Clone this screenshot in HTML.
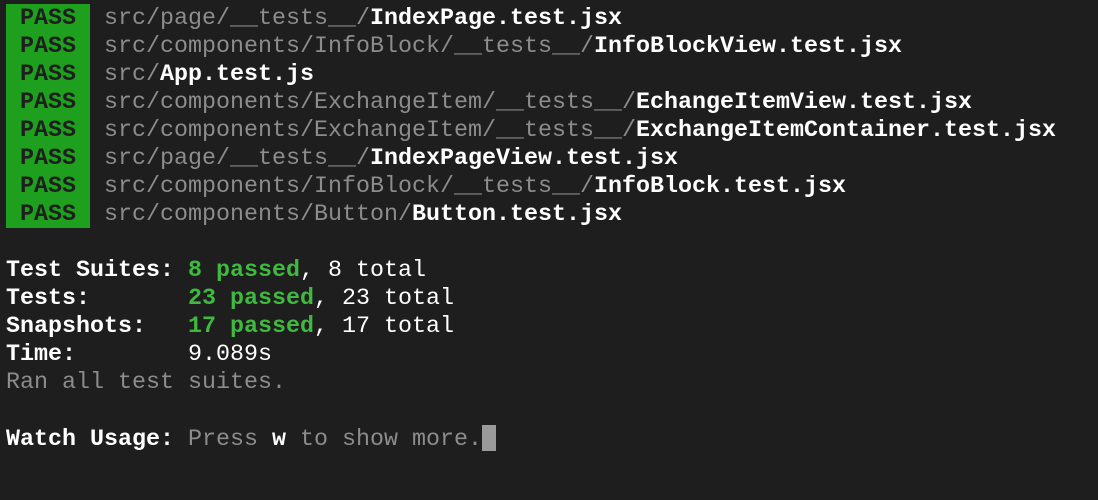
<!DOCTYPE html>
<html><head><meta charset="utf-8"><style>
html,body{margin:0;padding:0;background:#1e1e1e;width:1098px;height:500px;overflow:hidden}
pre{margin:0;position:absolute;left:6px;top:5px;font-family:"Liberation Mono",monospace;font-size:23.33px;line-height:28px;color:#fff}
.p{background:#1ea01e;color:#1e1e1e;font-weight:bold;display:inline-block;height:28px;line-height:31px;overflow:hidden;vertical-align:top;margin-top:-1px}
.g{color:#8c8c8c}
.b{font-weight:bold;color:#fff}
.gr{color:#3fba3f;font-weight:bold}
.c{display:inline-block;width:14px;height:26px;background:#9a9a9a;vertical-align:-6px}
</style></head><body><pre><span class="p"> PASS </span> <span class="g">src/page/__tests__/</span><span class="b">IndexPage.test.jsx</span>
<span class="p"> PASS </span> <span class="g">src/components/InfoBlock/__tests__/</span><span class="b">InfoBlockView.test.jsx</span>
<span class="p"> PASS </span> <span class="g">src/</span><span class="b">App.test.js</span>
<span class="p"> PASS </span> <span class="g">src/components/ExchangeItem/__tests__/</span><span class="b">EchangeItemView.test.jsx</span>
<span class="p"> PASS </span> <span class="g">src/components/ExchangeItem/__tests__/</span><span class="b">ExchangeItemContainer.test.jsx</span>
<span class="p"> PASS </span> <span class="g">src/page/__tests__/</span><span class="b">IndexPageView.test.jsx</span>
<span class="p"> PASS </span> <span class="g">src/components/InfoBlock/__tests__/</span><span class="b">InfoBlock.test.jsx</span>
<span class="p"> PASS </span> <span class="g">src/components/Button/</span><span class="b">Button.test.jsx</span>

<span class="b">Test Suites: </span><span class="gr">8 passed</span>, 8 total
<span class="b">Tests:       </span><span class="gr">23 passed</span>, 23 total
<span class="b">Snapshots:   </span><span class="gr">17 passed</span>, 17 total
<span class="b">Time:</span>        9.089s
<span class="g">Ran all test suites.</span>

<span class="b">Watch Usage: </span><span class="g">Press </span><span class="b">w</span><span class="g"> to show more.</span><span class="c"></span></pre></body></html>
